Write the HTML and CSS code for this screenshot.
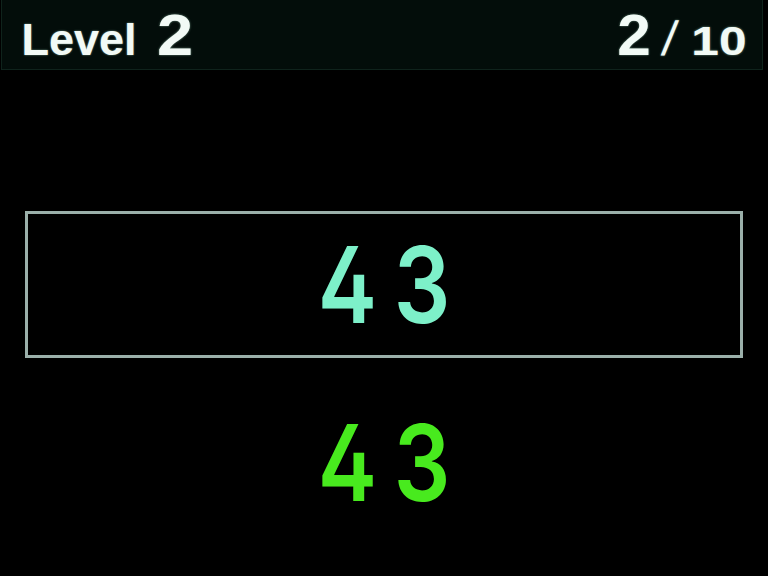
FILE: index.html
```html
<!DOCTYPE html>
<html>
<head>
<meta charset="utf-8">
<link rel="stylesheet" href="styles.css">
</head>
<body>
<div class="screen">
  <header class="topbar">
    <div class="level"><span class="level-label">Level</span><span class="level-num">2</span></div>
    <div class="progress"><span class="progress-cur">2</span><span class="progress-sep">/</span><span class="progress-total">10</span></div>
  </header>
  <div class="target-box">
    <div class="digits target">43</div>
  </div>
  <div class="digits answer">43</div>
</div>
</body>
</html>
```
FILE: styles.css
```css
html, body {
  margin: 0;
  padding: 0;
  background: #000;
}
.screen {
  width: 768px;
  height: 576px;
  background: #000;
  display: flex;
  flex-direction: column;
  align-items: center;
  overflow: hidden;
}
.topbar {
  box-sizing: border-box;
  width: 762px;
  height: 70px;
  margin-right: 5px;
  background: #030d0a;
  border: 1px solid #0f231c;
  border-top: none;
  display: flex;
  justify-content: space-between;
  align-items: baseline;
  padding: 0 15px 0 20px;
  font-family: "Liberation Sans", Arial, sans-serif;
  font-weight: bold;
  color: #f2faf6;
  text-shadow: 0 0 2px rgba(200, 255, 230, 0.6);
  line-height: 1;
}
.level, .progress {
  display: flex;
  align-items: baseline;
  padding-top: 6px;
}
.level-label {
  font-size: 45px;
}
.level-num {
  font-size: 58px;
  margin-left: 20px;
  display: inline-block;
  transform: scaleX(1.12);
  transform-origin: left bottom;
}
.progress-cur {
  font-size: 58px;
  display: inline-block;
  transform: scaleX(1.04);
}
.progress-sep {
  font-size: 48px;
  font-weight: normal;
  margin-left: 12px;
  display: inline-block;
  transform: skewX(-8deg);
}
.progress-total {
  font-size: 40px;
  margin-left: 26px;
  display: inline-block;
  transform: scaleX(1.24);
  transform-origin: right bottom;
}
.target-box {
  box-sizing: border-box;
  width: 718px;
  height: 147px;
  margin-top: 141px;
  border: 3px solid #9bb0aa;
  display: flex;
  align-items: center;
  justify-content: center;
}
.digits {
  font-family: Inter, Roboto, sans-serif;
  font-feature-settings: "cv02" 1;
  font-weight: 600;
  font-size: 106px;
  line-height: 106px;
  letter-spacing: 20px;
  padding-left: 20px;
  text-align: center;
  transform: scaleX(0.84);
}
.target {
  color: #7df0c9;
}
.answer {
  color: #48ea1e;
  margin-top: 52px;
}
```
